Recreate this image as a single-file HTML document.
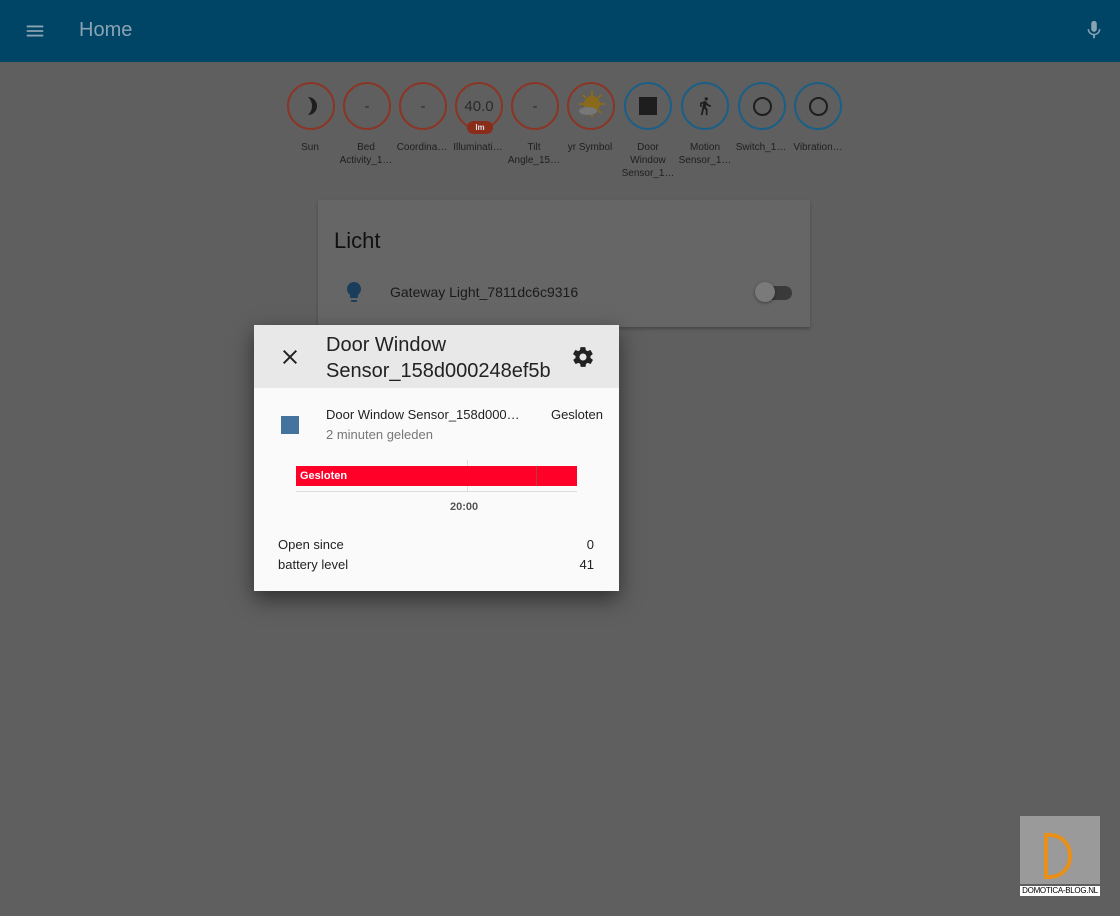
<!DOCTYPE html>
<html><head><meta charset="utf-8"><style>
body{margin:0;width:1120px;height:916px;background:#5f5f5f;font-family:"Liberation Sans",sans-serif;position:relative;overflow:hidden}
.hdr{position:absolute;left:0;top:0;width:1120px;height:62px;background:#004466}
.hdr .t{position:absolute;left:79px;top:19px;font-size:20px;color:#8aa3b3}
.b{position:absolute;top:82px;width:44px;height:44px;border-radius:50%;border:2px solid #8a3526;display:flex;align-items:center;justify-content:center;font-size:15px;color:#2a2a2a}
.b.bl{border-color:#1b5f86}
.lb{position:absolute;top:141px;width:56px;text-align:center;font-size:10px;line-height:13px;color:#1e1e1e}
.card{position:absolute;left:318px;top:200px;width:492px;height:127px;background:#666;box-shadow:0 2px 3px rgba(0,0,0,.25)}
.dlg{position:absolute;left:254px;top:325px;width:365px;height:266px;background:#fafafa;box-shadow:0 8px 20px rgba(0,0,0,.5)}
.dh{height:63px;background:#e8e8e8;position:relative}
</style></head><body>
<div class="hdr">
<svg style="position:absolute;left:24px;top:20px" width="22" height="22" viewBox="0 0 24 24"><path d="M3 6h18v2H3zM3 11h18v2H3zM3 16h18v2H3z" fill="#8aa3b3"/></svg>
<div class="t">Home</div>
<svg style="position:absolute;left:1083px;top:19px" width="22" height="22" viewBox="0 0 24 24"><path d="M12 14a3 3 0 0 0 3-3V5a3 3 0 0 0-6 0v6a3 3 0 0 0 3 3zm5.3-3c0 3-2.5 5.1-5.3 5.1S6.7 14 6.7 11H5c0 3.4 2.7 6.2 6 6.7V21h2v-3.3c3.3-.5 6-3.3 6-6.7z" fill="#8aa3b3"/></svg>
</div>

<div class="b" style="left:287px"><svg width="20" height="22" viewBox="0 0 20 22"><path d="M7 2A9 9 0 0 1 7 20A12 12 0 0 0 7 2z" fill="#1e1e1e"/></svg></div>
<div class="b" style="left:343px">-</div>
<div class="b" style="left:399px">-</div>
<div class="b" style="left:455px">40.0</div>
<div style="position:absolute;left:467px;top:121px;width:26px;height:13px;border-radius:7px;background:#8a2c1a;color:#ddd;font-size:8px;text-align:center;line-height:13px;font-weight:bold">lm</div>
<div class="b" style="left:511px">-</div>
<div class="b" style="left:567px"><svg width="34" height="34" viewBox="0 0 34 34"><circle cx="18" cy="15" r="8" fill="#8a6a1a"/><path d="M18 2v5M18 23v5M5 15h5M26 15h5M9 6l3 3M27 6l-3 3M9 24l3-3M27 24l-3-3" stroke="#8a6a1a" stroke-width="2"/><ellipse cx="14" cy="22" rx="9" ry="4" fill="#777"/></svg></div>
<div class="b bl" style="left:624px"><div style="width:18px;height:18px;background:#1e1e1e"></div></div>
<div class="b bl" style="left:681px"><svg width="20" height="22" viewBox="0 0 24 24"><path d="M13.5 5.5a2 2 0 1 0 0-4a2 2 0 0 0 0 4zM9.8 8.9 7 23h2.1l1.8-8 2.1 2v6h2v-7.5l-2.1-2 .6-3C14.8 12 16.8 13 19 13v-2c-1.9 0-3.5-1-4.300-2.4l-1-1.6c-.4-.6-1-1-1.7-1-.3 0-.5.1-.8.1L6 8.3V13h2V9.6l1.8-.7" fill="#1e1e1e"/></svg></div>
<div class="b bl" style="left:738px"><div style="width:15px;height:15px;border:2px solid #1e1e1e;border-radius:50%"></div></div>
<div class="b bl" style="left:794px"><div style="width:15px;height:15px;border:2px solid #1e1e1e;border-radius:50%"></div></div>

<div class="lb" style="left:282px">Sun</div>
<div class="lb" style="left:338px">Bed Activity_1…</div>
<div class="lb" style="left:394px">Coordina…</div>
<div class="lb" style="left:450px">Illuminati…</div>
<div class="lb" style="left:506px">Tilt Angle_15…</div>
<div class="lb" style="left:562px">yr Symbol</div>
<div class="lb" style="left:620px">Door Window Sensor_1…</div>
<div class="lb" style="left:677px">Motion Sensor_1…</div>
<div class="lb" style="left:733px">Switch_1…</div>
<div class="lb" style="left:790px">Vibration…</div>

<div class="card">
<div style="position:absolute;left:16px;top:28px;font-size:22px;color:#111">Licht</div>
<svg style="position:absolute;left:24px;top:80px" width="24" height="24" viewBox="0 0 24 24"><path d="M9 21c0 .5.4 1 1 1h4c.6 0 1-.5 1-1v-1H9v1zm3-19C8.1 2 5 5.1 5 9c0 2.4 1.2 4.5 3 5.7V17c0 .5.4 1 1 1h6c.6 0 1-.5 1-1v-2.3c1.8-1.3 3-3.4 3-5.7 0-3.9-3.1-7-7-7z" fill="#1a3d5c"/></svg>
<div style="position:absolute;left:72px;top:84px;font-size:14px;color:#1a1a1a">Gateway Light_7811dc6c9316</div>
<div style="position:absolute;left:440px;top:86px;width:34px;height:14px;border-radius:7px;background:#3a3a3a"></div>
<div style="position:absolute;left:437px;top:82px;width:20px;height:20px;border-radius:50%;background:#7a7a7a;box-shadow:0 1px 3px rgba(0,0,0,.4)"></div>
</div>

<div class="dlg">
<div class="dh">
<svg style="position:absolute;left:24px;top:20px" width="24" height="24" viewBox="0 0 24 24"><path d="M19 6.4 17.6 5 12 10.6 6.4 5 5 6.4 10.6 12 5 17.6 6.4 19 12 13.4 17.6 19 19 17.6 13.4 12z" fill="#222"/></svg>
<div style="position:absolute;left:72px;top:7px;font-size:20px;line-height:26px;color:#222">Door Window<br>Sensor_158d000248ef5b</div>
<svg style="position:absolute;left:317px;top:20px" width="24" height="24" viewBox="0 0 24 24"><path d="M19.4 13c0-.3.1-.6.1-1s0-.7-.1-1l2.1-1.6c.2-.2.2-.4.1-.6l-2-3.5c-.1-.2-.4-.3-.6-.2l-2.5 1c-.5-.4-1.100-.7-1.700-1l-.4-2.6c0-.2-.2-.4-.5-.4h-4c-.3 0-.5.2-.5.4l-.4 2.6c-.6.3-1.200.6-1.700 1l-2.500-1c-.2-.1-.5 0-.6.2l-2 3.5c-.1.2-.1.5.1.6L4.6 11c0 .3-.1.7-.1 1s0 .7.1 1l-2.1 1.6c-.2.2-.2.4-.1.6l2 3.5c.1.2.4.3.6.2l2.5-1c.5.4 1.1.7 1.7 1l.4 2.6c0 .2.2.4.5.4h4c.3 0 .5-.2.5-.4l.4-2.6c.6-.3 1.2-.6 1.7-1l2.5 1c.2.1.5 0 .6-.2l2-3.5c.1-.2.1-.5-.1-.6L19.4 13zM12 15.5c-1.9 0-3.5-1.6-3.5-3.5s1.6-3.5 3.5-3.5 3.5 1.6 3.5 3.5-1.6 3.5-3.5 3.5z" fill="#222"/></svg>
</div>
<div style="position:absolute;left:27px;top:91px;width:18px;height:18px;background:#44739e"></div>
<div style="position:absolute;left:72px;top:82px;font-size:13px;color:#222">Door Window Sensor_158d000…</div>
<div style="position:absolute;right:16px;top:82px;font-size:13px;color:#222">Gesloten</div>
<div style="position:absolute;left:72px;top:102px;font-size:13px;color:#777">2 minuten geleden</div>
<div style="position:absolute;left:213px;top:135px;width:1px;height:32px;background:#ddd"></div>
<div style="position:absolute;left:42px;top:166px;width:281px;height:1px;background:#ddd"></div>
<div style="position:absolute;left:42px;top:141px;width:281px;height:20px;background:#ff0029"></div>
<div style="position:absolute;left:282px;top:141px;width:1px;height:20px;background:#b04040"></div>
<div style="position:absolute;left:46px;top:145px;font-size:11px;font-weight:bold;color:#fff">Gesloten</div>
<div style="position:absolute;left:196px;top:176px;font-size:11px;font-weight:bold;color:#555">20:00</div>
<div style="position:absolute;left:24px;top:212px;font-size:13px;color:#222">Open since</div>
<div style="position:absolute;right:25px;top:212px;font-size:13px;color:#222">0</div>
<div style="position:absolute;left:24px;top:232px;font-size:13px;color:#222">battery level</div>
<div style="position:absolute;right:25px;top:232px;font-size:13px;color:#222">41</div>
</div>

<div style="position:absolute;left:1020px;top:816px;width:80px;height:68px;background:#9a9a9a"></div>
<div style="position:absolute;left:1044px;top:833px;width:20px;height:38px;border:4px solid #e8901a;border-radius:0 22px 22px 0"></div>
<div style="position:absolute;left:1020px;top:886px;width:80px;height:10px;background:#fff;font-size:8px;line-height:10px;color:#000;text-align:center;white-space:nowrap;letter-spacing:-.3px">DOMOTICA-BLOG.NL</div>
</body></html>
